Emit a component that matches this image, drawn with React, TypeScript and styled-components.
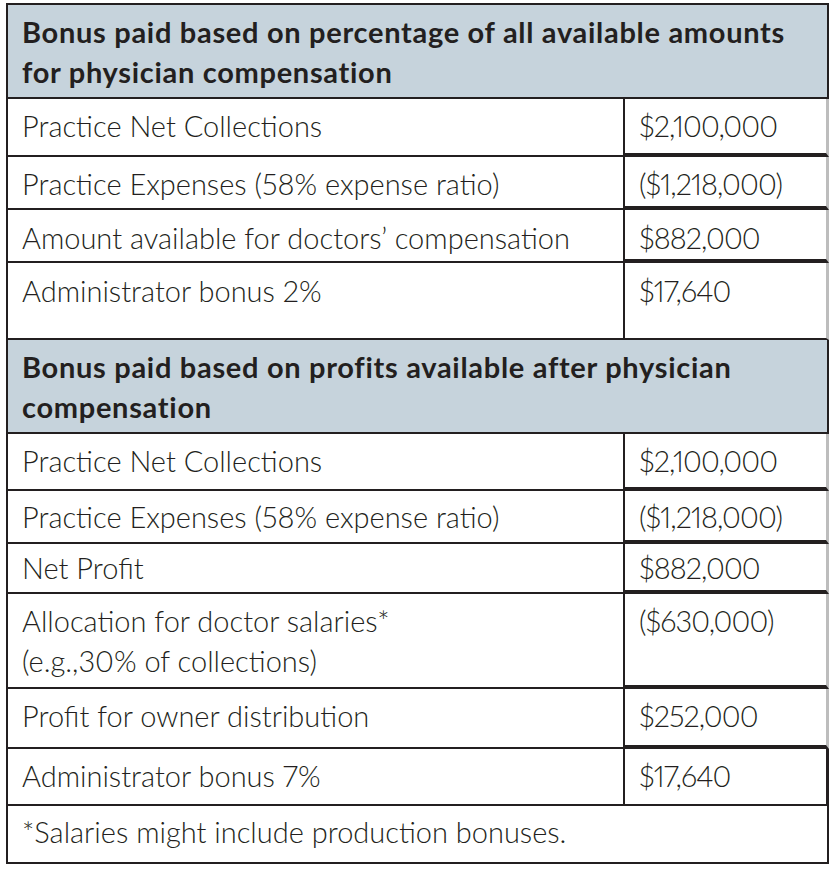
import React from "react";
import styled, { createGlobalStyle } from "styled-components";

const ink = "#231f20";

const Global = createGlobalStyle`
  html, body { margin: 0; padding: 0; background: #ffffff; }
  body {
    font-family: Lato, "Open Sans", "Liberation Sans", sans-serif;
    font-variant-numeric: proportional-nums;
    color: ${ink};
  }
  * { box-sizing: border-box; }
`;

const Page = styled.div`
  padding: 3px 0 0 6px;
`;

const Table = styled.div`
  width: 823px;
  display: flex;
  flex-direction: column;
  border-top: 2px solid ${ink};
  border-left: 2px solid ${ink};
`;

const Header = styled.div`
  height: 94px;
  padding: 7px 14px 0 14px;
  background: #c6d3dc;
  border-right: 2px solid ${ink};
  border-bottom: 2px solid ${ink};
  font-size: 29px;
  font-weight: 700;
  letter-spacing: 0.7px;
  line-height: 40px;
`;

const Row = styled.div<{ $h: number }>`
  display: grid;
  grid-template-columns: 617px 1fr;
  height: ${(p) => p.$h}px;
`;

const Label = styled.div<{ $pt: number }>`
  padding: ${(p) => p.$pt}px 14px 0 14px;
  border-right: 2px solid ${ink};
  border-bottom: 2px solid ${ink};
  font-size: 29px;
  font-weight: 300;
  line-height: 40px;
`;

const Value = styled.div<{ $pt: number; $thick: boolean; $boxed: boolean }>`
  padding: ${(p) => p.$pt}px 0 0 14px;
  border-right: 3px solid ${(p) => (p.$boxed ? ink : "#bdbdbd")};
  border-bottom: ${(p) => (p.$thick ? 4 : 2)}px solid ${ink};
  font-size: 29px;
  font-weight: 300;
  letter-spacing: -0.9px;
  line-height: 40px;
`;

const Note = styled.div`
  height: 58px;
  padding: 6px 14px 0 14px;
  border-right: 2px solid ${ink};
  border-bottom: 2px solid ${ink};
  font-size: 29px;
  font-weight: 300;
  line-height: 40px;
`;

type Line = {
  label: React.ReactNode;
  value: string;
  h: number;
  pt: number;
  thick?: boolean;
  boxed?: boolean;
};

const first: Line[] = [
  { label: "Practice Net Collections", value: "$2,100,000", h: 58, pt: 7, thick: true },
  { label: "Practice Expenses (58% expense ratio)", value: "($1,218,000)", h: 53, pt: 7, thick: true },
  { label: "Amount available for doctors’ compensation", value: "$882,000", h: 53, pt: 8, thick: true },
  { label: "Administrator bonus 2%", value: "$17,640", h: 77, pt: 8 },
];

const second: Line[] = [
  { label: "Practice Net Collections", value: "$2,100,000", h: 57, pt: 7, thick: true },
  { label: "Practice Expenses (58% expense ratio)", value: "($1,218,000)", h: 53, pt: 6, thick: true },
  { label: "Net Profit", value: "$882,000", h: 50, pt: 4, thick: true },
  {
    label: (
      <>
        Allocation for doctor salaries*
        <br />
        (e.g.,30% of collections)
      </>
    ),
    value: "($630,000)",
    h: 95,
    pt: 7,
    thick: true,
  },
  { label: "Profit for owner distribution", value: "$252,000", h: 60, pt: 7, thick: true },
  { label: "Administrator bonus 7%", value: "$17,640", h: 57, pt: 7, boxed: true },
];

const Section = ({ title, lines }: { title: React.ReactNode; lines: Line[] }) => (
  <>
    <Header>{title}</Header>
    {lines.map((l, i) => (
      <Row key={i} $h={l.h}>
        <Label $pt={l.pt}>{l.label}</Label>
        <Value $pt={l.pt} $thick={!!l.thick} $boxed={!!l.boxed}>
          {l.value}
        </Value>
      </Row>
    ))}
  </>
);

export default function App() {
  return (
    <>
      <Global />
      <Page>
        <Table>
          <Section
            title={
              <>
                Bonus paid based on percentage of all available amounts
                <br />
                for physician compensation
              </>
            }
            lines={first}
          />
          <Section
            title={
              <>
                Bonus paid based on profits available after physician
                <br />
                compensation
              </>
            }
            lines={second}
          />
          <Note>*Salaries might include production bonuses.</Note>
        </Table>
      </Page>
    </>
  );
}
